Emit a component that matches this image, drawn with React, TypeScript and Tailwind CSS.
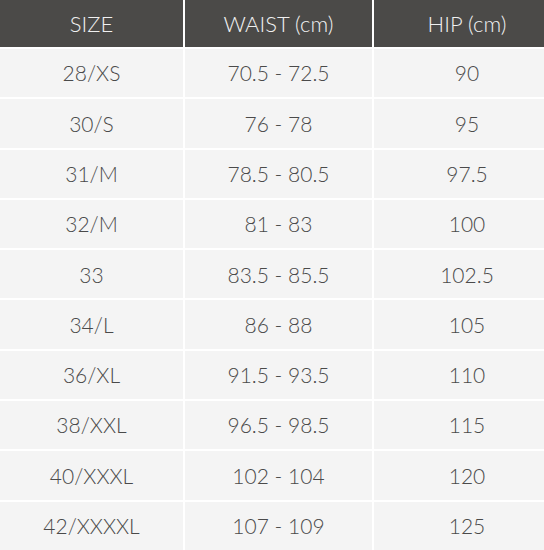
const rows = [
  ['28/XS', '70.5 - 72.5', '90'],
  ['30/S', '76 - 78', '95'],
  ['31/M', '78.5 - 80.5', '97.5'],
  ['32/M', '81 - 83', '100'],
  ['33', '83.5 - 85.5', '102.5'],
  ['34/L', '86 - 88', '105'],
  ['36/XL', '91.5 - 93.5', '110'],
  ['38/XXL', '96.5 - 98.5', '115'],
  ['40/XXXL', '102 - 104', '120'],
  ['42/XXXXL', '107 - 109', '125']
]

const headers = ['SIZE', 'WAIST (cm)', 'HIP (cm)']

export default function App() {
  return (
    <div
      className="h-[550px] w-[544px] overflow-hidden bg-white"
      style={{ fontFamily: 'Lato, "Open Sans", sans-serif' }}>
      <div className="w-[560px]">
        <div className="grid h-[47px] grid-cols-[183px_187px_1fr] gap-x-[2px] bg-white">
          {headers.map((h) => (
            <div key={h} className="flex items-center justify-center bg-[#4b4a48] text-[22px] font-light text-[#f0f0f0]">
              {h}
            </div>
          ))}
        </div>
        {rows.map((row, i) => (
          <div key={i} className="mt-[2px] grid h-[48.3px] grid-cols-[183px_187px_1fr] gap-x-[2px] bg-white">
            {row.map((cell, j) => (
              <div key={j} className="flex items-center justify-center bg-[#f4f4f4] text-[21px] font-light text-[#4a4a4a]">
                {cell}
              </div>
            ))}
          </div>
        ))}
      </div>
    </div>
  )
}
